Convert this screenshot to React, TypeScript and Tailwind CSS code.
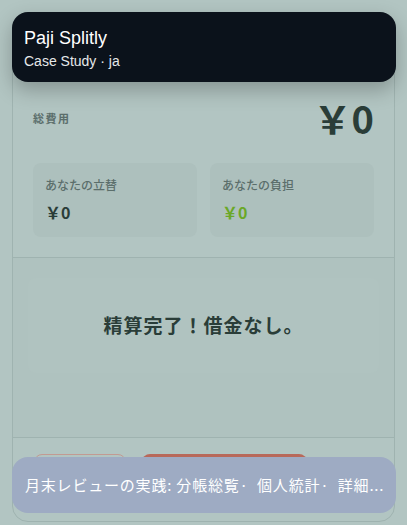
import React from 'react';

const jp = { fontFamily: '"Noto Sans CJK JP", "Noto Sans", sans-serif' };
const latin = { fontFamily: '"Liberation Sans", "Noto Sans CJK JP", sans-serif' };

export default function App() {
  return (
    <div className="relative h-[525px] w-full overflow-hidden bg-[#b2c5c2] p-3" style={jp}>
      {/* card */}
      <div className="flex h-[510px] flex-col rounded-2xl border border-[#9fb3b0] bg-[#b2c5c2]">
        <div className="px-5 pb-5 pt-[84px]">
          <div className="flex h-[42px] items-center justify-between">
            <span className="text-[11px] font-bold tracking-[1.5px] text-[#5b6e6b]">総費用</span>
            <span className="text-[38px] font-bold leading-none text-[#2a3d38]">￥0</span>
          </div>
          <div className="mt-[24px] grid grid-cols-2 gap-[13px]">
            <div className="flex h-[74px] flex-col justify-center gap-[6px] rounded-lg bg-[#adc0bd] px-3">
              <span className="text-[12px] font-medium text-[#5b6e6b]">あなたの立替</span>
              <span className="text-[16px] font-bold text-[#2a3d38]">￥0</span>
            </div>
            <div className="flex h-[74px] flex-col justify-center gap-[6px] rounded-lg bg-[#adc0bd] px-3">
              <span className="text-[12px] font-medium text-[#5b6e6b]">あなたの負担</span>
              <span className="text-[16px] font-bold text-[#6aa827]">￥0</span>
            </div>
          </div>
        </div>
        <div className="border-t border-[#9fb3b0] bg-[#afc2bf] px-[15px] pb-[64px] pt-5">
          <div className="flex h-[95px] items-center justify-center rounded-lg bg-[#b0c3c0]">
            <span className="text-[19px] font-bold tracking-[1px] text-[#2a3d38]">精算完了！借金なし。</span>
          </div>
        </div>
        <div className="flex gap-4 border-t border-[#9fb3b0] px-[21px] pt-4">
          <div className="h-10 w-[92px] rounded-lg border border-[#c29a92]" />
          <div className="h-10 w-[165px] rounded-lg bg-[#b8695a]" />
        </div>
      </div>

      {/* header overlay */}
      <div
        className="absolute left-3 right-[11px] top-3 flex h-[70px] flex-col justify-center rounded-2xl bg-[#0b121b] px-3 pt-1 shadow-[0_8px_20px_rgba(0,0,0,0.25)]"
        style={latin}
      >
        <span className="text-[18px] leading-[24px] text-white">Paji Splitly</span>
        <span className="text-[14px] leading-[22px] text-[#e6e8ea]">Case Study · ja</span>
      </div>

      {/* toast */}
      <div className="absolute bottom-[12px] left-3 right-[11px] flex h-[56px] items-center rounded-2xl bg-[#9eabc3] px-[13px]">
        <span className="whitespace-pre text-[15px] tracking-[0.8px] text-white">月末レビューの実践: 分帳総覧·  個人統計·  詳細...</span>
      </div>
    </div>
  );
}
